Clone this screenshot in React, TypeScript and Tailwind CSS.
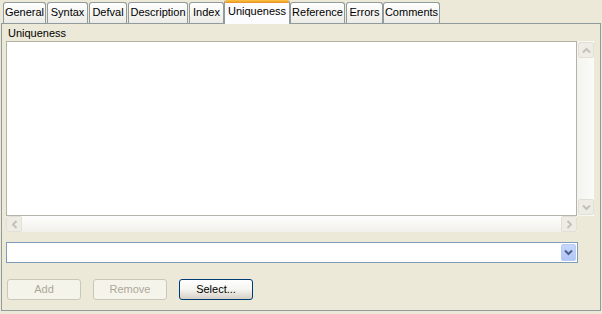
import { ReactNode } from "react";

const tabs = [
  { label: "General", w: "w-[43px]", ml: "ml-[3px]" },
  { label: "Syntax", w: "w-[41px]", ml: "ml-[1px]" },
  { label: "Defval", w: "w-[38px]", ml: "ml-[1px]" },
  { label: "Description", w: "w-[60px]", ml: "ml-[1px]" },
  { label: "Index", w: "w-[35px]", ml: "ml-[1px]" },
  { label: "Uniqueness", w: "w-[66px]", ml: "ml-0", active: true },
  { label: "Reference", w: "w-[55px]", ml: "ml-0" },
  { label: "Errors", w: "w-[37px]", ml: "ml-[1px]" },
  { label: "Comments", w: "w-[57px]", ml: "ml-0" },
];

function Tab({ label, w, ml, active }: { label: string; w: string; ml: string; active?: boolean }) {
  if (active) {
    return (
      <div
        className={`${w} ${ml} relative z-10 -mb-px flex h-[24px] flex-col overflow-hidden rounded-t-[3px] border-x border-[#919b9c] bg-[#fcfcfe]`}
      >
        <div className="h-[3px] bg-gradient-to-b from-[#ffc83c] to-[#e68b2c]" />
        <div className="flex flex-1 items-start justify-center pt-[2px] text-black">{label}</div>
      </div>
    );
  }
  return (
    <div
      className={`${w} ${ml} flex h-[21px] items-start justify-center rounded-t-[3px] border-x border-t border-[#919b9c] bg-gradient-to-b from-[#ffffff] to-[#ecebe6] pt-[3px] text-black`}
    >
      {label}
    </div>
  );
}

function ScrollBtn({ children, className = "" }: { children: ReactNode; className?: string }) {
  return (
    <div
      className={`flex h-[16px] w-[16px] items-center justify-center rounded-[2px] border border-[#e2e0d6] bg-[#eeede5] ${className}`}
    >
      {children}
    </div>
  );
}

function Chevron({ dir, color = "#c3c2b9" }: { dir: "up" | "down" | "left" | "right"; color?: string }) {
  const rot = { up: 180, down: 0, left: 90, right: -90 }[dir];
  return (
    <svg width="9" height="9" viewBox="0 0 9 9" style={{ transform: `rotate(${rot}deg)` }}>
      <path d="M1 2.5 L4.5 6 L8 2.5" fill="none" stroke={color} strokeWidth="2" />
    </svg>
  );
}

function XpButton({ label, disabled }: { label: string; disabled?: boolean }) {
  if (disabled) {
    return (
      <div className="flex h-[21px] w-[74px] items-center justify-center rounded-[3px] border border-[#c9c7ba] bg-[#f5f4ea] text-[#aca899]">
        {label}
      </div>
    );
  }
  return (
    <div className="flex h-[21px] w-[74px] items-center justify-center rounded-[3px] border border-[#003c74] bg-gradient-to-b from-[#ffffff] via-[#f4f4f0] to-[#d6d0c5] text-black">
      {label}
    </div>
  );
}

export default function App() {
  return (
    <div
      className="h-[314px] w-[602px] overflow-hidden bg-[#ece9d8] text-[11px] leading-[13px]"
      style={{ fontFamily: "Tahoma, 'Liberation Sans', Arial, sans-serif" }}
    >
      <div className="flex h-[23px] items-end">
        {tabs.map((t) => (
          <Tab key={t.label} {...t} />
        ))}
      </div>

      <div className="ml-[1px] h-[288px] w-[600px] border border-[#919b9c] pl-[4px]">
        <div className="ml-[2px] pt-[3px] pb-[1px] text-black">Uniqueness</div>

        <div className="grid h-[191px] w-[588px] grid-cols-[571px_17px] grid-rows-[175px_16px]">
          <div className="border border-[#b5b2a8] bg-white" />
          <div className="flex flex-col justify-between bg-gradient-to-r from-[#f3f3ef] to-[#fbfbf9] py-px pl-px">
            <ScrollBtn>
              <Chevron dir="up" />
            </ScrollBtn>
            <ScrollBtn>
              <Chevron dir="down" />
            </ScrollBtn>
          </div>
          <div className="flex items-center justify-between bg-gradient-to-b from-[#fefefe] to-[#f1f0ea]">
            <ScrollBtn>
              <Chevron dir="left" />
            </ScrollBtn>
            <ScrollBtn>
              <Chevron dir="right" />
            </ScrollBtn>
          </div>
          <div />
        </div>

        <div className="mt-[10px] flex h-[21px] w-[572px] items-center justify-end border border-[#7f9db9] bg-white pr-px">
          <div className="flex h-[17px] w-[15px] items-center justify-center rounded-[2px] border border-[#b9cbf3] bg-gradient-to-b from-[#c6d7fc] to-[#b0c6f7]">
            <Chevron dir="down" color="#4d6185" />
          </div>
        </div>

        <div className="mt-[16px] ml-[1px] flex gap-[12px]">
          <XpButton label="Add" disabled />
          <XpButton label="Remove" disabled />
          <XpButton label="Select..." />
        </div>
      </div>
    </div>
  );
}
